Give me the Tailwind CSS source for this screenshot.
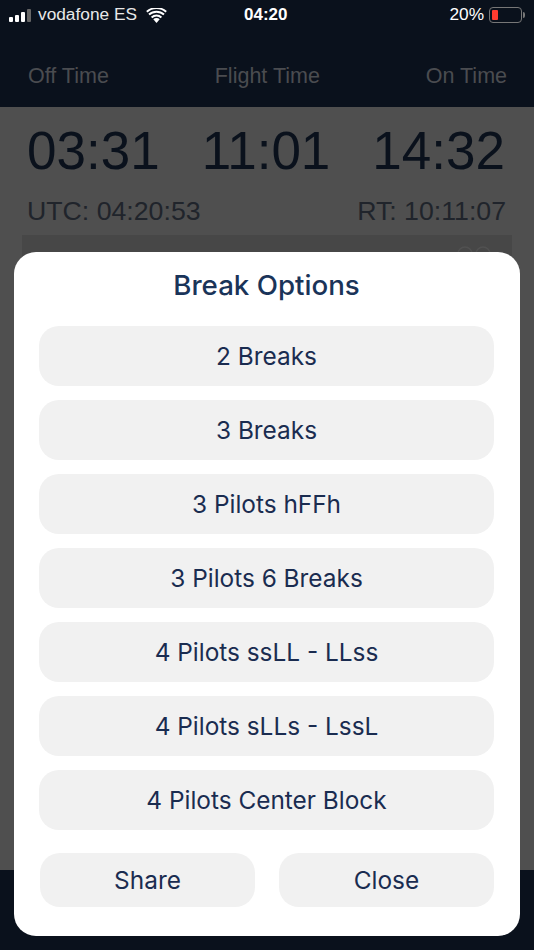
<!DOCTYPE html>
<html lang="en">
<head>
  <meta charset="UTF-8">
  <script src="https://cdn.jsdelivr.net/npm/@tailwindcss/browser@4"></script>
</head>
<body class="bg-[#0a111c]">
<div class="relative w-[534px] h-[950px] overflow-hidden bg-[#0a111c] font-['Liberation_Sans',sans-serif]">

  <!-- status bar -->
  <div class="relative flex items-center h-[30px] pl-[9px] pr-[9px] text-[17.3px] text-[#e8e8e8]">
    <div class="flex items-end gap-[2px] w-[23px] h-[14px]">
      <span class="w-[4px] h-[5px] rounded-[1px] bg-white"></span>
      <span class="w-[4px] h-[7px] rounded-[1px] bg-white"></span>
      <span class="w-[4px] h-[10px] rounded-[1px] bg-white"></span>
      <span class="w-[4px] h-[13px] rounded-[1px] bg-[#666]"></span>
    </div>
    <span class="ml-[6px]">vodafone ES</span>
    <svg class="ml-[9px]" width="21" height="15" viewBox="0 0 21 15">
      <path d="M10.5 15 7.3 11.3a4.6 4.6 0 0 1 6.4 0Z" fill="#fff"/>
      <path d="M5.6 9.4a7.2 7.2 0 0 1 9.8 0" fill="none" stroke="#fff" stroke-width="2"/>
      <path d="M3 6.6a11 11 0 0 1 15 0" fill="none" stroke="#fff" stroke-width="2"/>
      <path d="M.8 3.8a14.6 14.6 0 0 1 19.4 0" fill="none" stroke="#fff" stroke-width="2"/>
    </svg>
    <span class="absolute left-[244px] font-bold text-white text-[17px]">04:20</span>
    <div class="ml-auto flex items-center">
      <span class="text-white">20%</span>
      <div class="ml-[5px] w-[33px] h-[16px] rounded-[4px] border border-[#777] p-[2px]">
        <div class="w-[6px] h-full rounded-[1px] bg-[#ff3b30]"></div>
      </div>
      <span class="ml-[1px] w-[2px] h-[6px] rounded-r-sm bg-[#777]"></span>
    </div>
  </div>

  <!-- tabs -->
  <div class="flex items-center justify-between h-[77px] pl-[28px] pr-[27px] pt-[15px] text-[21.5px] text-[#4a4c50]">
    <span>Off Time</span>
    <span>Flight Time</span>
    <span>On Time</span>
  </div>

  <!-- dimmed content -->
  <div class="h-[763px] bg-[#4f4f4f] px-[22px]">
    <div class="flex justify-between pl-[5px] pr-[7px] pt-[14px] text-[53px] leading-[60px] text-[#0a111c]">
      <span>03:31</span>
      <span>11:01</span>
      <span>14:32</span>
    </div>
    <div class="flex justify-between pl-[5px] pr-[6px] pt-[14px] text-[26.7px] leading-[32px] text-[#20242b]">
      <span>UTC: 04:20:53</span>
      <span>RT: 10:11:07</span>
    </div>
    <div class="relative mt-[8px] h-[30px] bg-[#474747]">
      <svg class="absolute right-[20px] top-[11px]" width="36" height="8" viewBox="0 0 36 8" fill="none" stroke="#515151" stroke-width="1.5">
        <path d="M2 8a7 7 0 0 1 14 0M20 8a7 7 0 0 1 14 0"/>
      </svg>
    </div>
  </div>

  <!-- break options modal -->
  <div class="absolute left-[14px] top-[252px] w-[506px] h-[684px] rounded-[22px] bg-white pl-[25px] pr-[26px] font-['Inter',sans-serif]">
    <h2 class="h-[74px] pt-[15px] text-center text-[27.7px] leading-[36px] font-medium text-[#1a3459]">Break Options</h2>
    <div class="flex flex-col gap-[14px] text-[24.4px] text-[#1a2c50]">
      <button class="h-[60px] rounded-[20px] bg-[#f1f1f1]">2 Breaks</button>
      <button class="h-[60px] rounded-[20px] bg-[#f1f1f1]">3 Breaks</button>
      <button class="h-[60px] rounded-[20px] bg-[#f1f1f1]">3 Pilots hFFh</button>
      <button class="h-[60px] rounded-[20px] bg-[#f1f1f1]">3 Pilots 6 Breaks</button>
      <button class="h-[60px] rounded-[20px] bg-[#f1f1f1]">4 Pilots ssLL - LLss</button>
      <button class="h-[60px] rounded-[20px] bg-[#f1f1f1]">4 Pilots sLLs - LssL</button>
      <button class="h-[60px] rounded-[20px] bg-[#f1f1f1]">4 Pilots Center Block</button>
    </div>
    <div class="flex justify-between mt-[23px] pl-px text-[24.4px] text-[#1a2c50]">
      <button class="w-[215px] h-[54px] rounded-[20px] bg-[#f1f1f1]">Share</button>
      <button class="w-[215px] h-[54px] rounded-[20px] bg-[#f1f1f1]">Close</button>
    </div>
  </div>
</div>
</body>
</html>
